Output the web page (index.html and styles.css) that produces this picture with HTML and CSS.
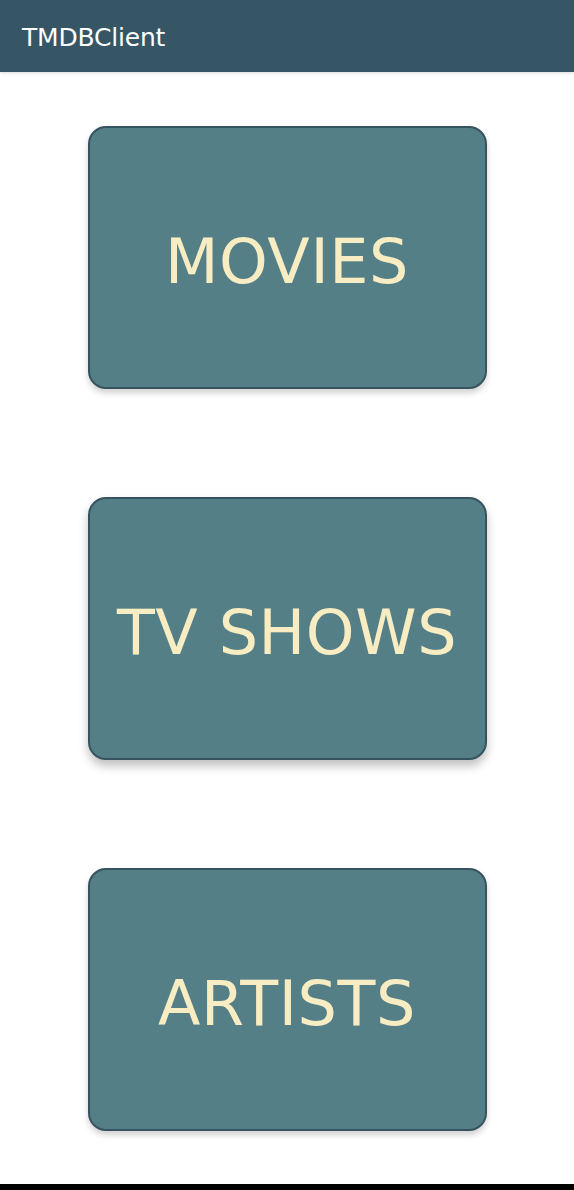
FILE: index.html
```html
<!DOCTYPE html>
<html>
<head>
<meta charset="utf-8">
<link rel="stylesheet" href="styles.css">
</head>
<body>
<header class="appbar"><span class="title">TMDBClient</span></header>
<main class="menu">
  <button class="card">MOVIES</button>
  <button class="card raised">TV SHOWS</button>
  <button class="card">ARTISTS</button>
</main>
<div class="navbar"></div>
</body>
</html>
```
FILE: styles.css
```css
html, body {
  margin: 0;
  padding: 0;
  background: #ffffff;
}
body {
  width: 574px;
  height: 1190px;
  display: flex;
  flex-direction: column;
  font-family: "DejaVu Sans", "Open Sans", sans-serif;
  overflow: hidden;
}
.appbar {
  height: 72px;
  background: #365666;
  display: flex;
  align-items: center;
  padding-left: 22px;
  box-sizing: border-box;
  box-shadow: 0 1px 3px rgba(0,0,0,0.15);
}
.title {
  color: #ffffff;
  font-size: 25px;
  letter-spacing: -0.2px;
  padding-top: 2px;
}
.menu {
  flex: 1;
  display: flex;
  flex-direction: column;
  align-items: center;
  padding-top: 54px;
  gap: 108px;
}
.card {
  width: 399px;
  height: 263px;
  flex-shrink: 0;
  box-sizing: border-box;
  background: #557f87;
  border: 2px solid #36535f;
  border-radius: 18px;
  color: #f8ecc2;
  font-family: "DejaVu Sans", sans-serif;
  font-size: 62px;
  font-weight: normal;
  letter-spacing: 0.6px;
  padding: 8px 0 0 0;
  box-shadow: 0 4px 6px rgba(0,0,0,0.18);
}
.card.raised {
  box-shadow: 0 6px 10px rgba(0,0,0,0.25);
}
.navbar {
  height: 6px;
  background: #000000;
}
```
